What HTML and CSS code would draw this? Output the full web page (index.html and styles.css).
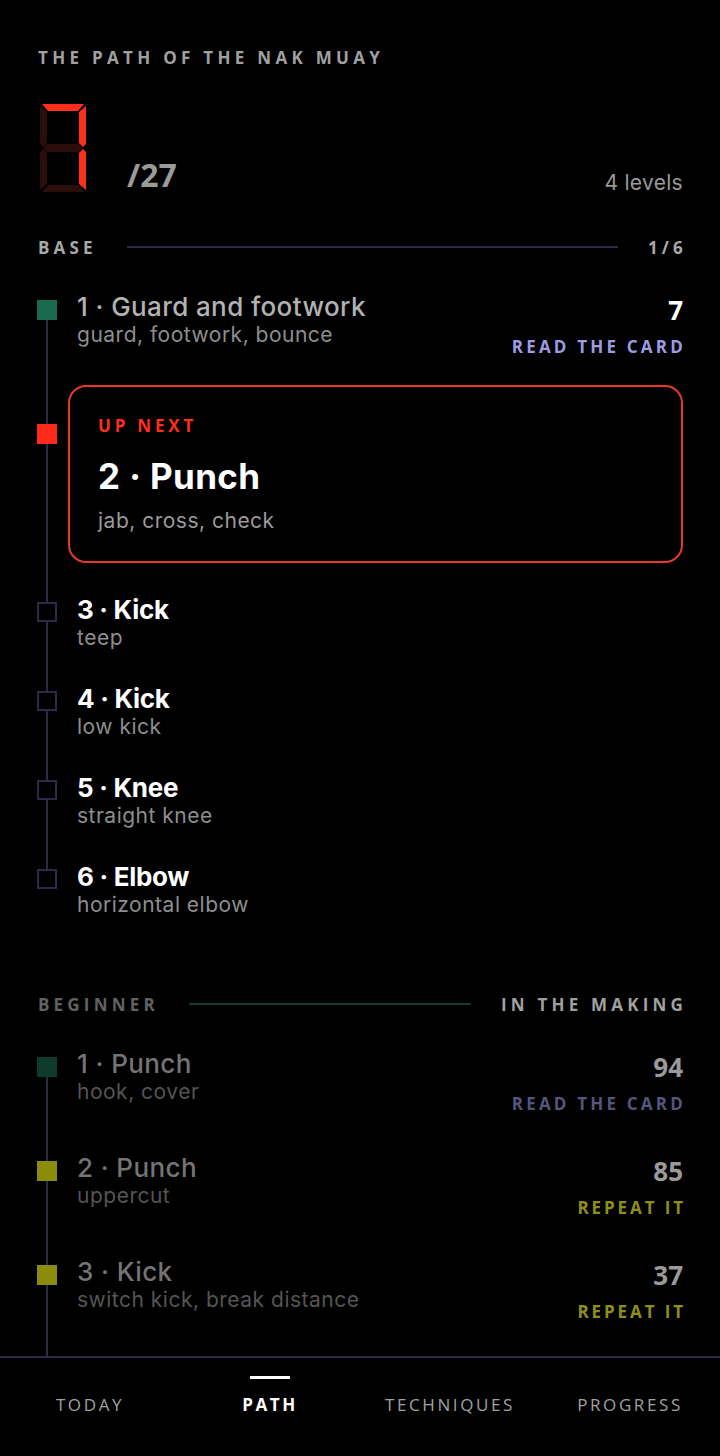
FILE: index.html
```html
<!DOCTYPE html>
<html lang="en">
<head>
    <meta charset="UTF-8">
    <title>The Path</title>
    <link rel="stylesheet" href="styles.css">
</head>
<body>

<div class="app">
    <main class="page">
        <div class="eyebrow">THE PATH OF THE NAK MUAY</div>

        <div class="score">
            <svg class="digit" viewBox="0 0 48 90" width="48" height="90">
                <polygon class="on" points="3,1 45,1 39,8 9,8"/>
                <polygon class="off" points="1,3 8,9 8,40 4,44 1,41"/>
                <polygon class="on" points="47,3 47,41 44,44 40,40 40,9"/>
                <polygon class="off" points="4,45 8,41 40,41 44,45 40,49 8,49"/>
                <polygon class="off" points="1,49 4,46 8,50 8,81 1,87"/>
                <polygon class="on" points="47,49 44,46 40,50 40,81 47,87"/>
                <polygon class="off" points="9,82 39,82 45,89 3,89"/>
            </svg>
            <span class="total">/27</span>
            <span class="levels">4 levels</span>
        </div>

        <section class="level">
            <div class="level-head">
                <span class="level-name">BASE</span>
                <span class="level-line"></span>
                <span class="level-count">1/6</span>
            </div>

            <div class="steps">
                <div class="step done">
                    <span class="mark mark-green"></span>
                    <div class="step-body">
                        <div class="step-title">1 · Guard and footwork</div>
                        <div class="step-sub">guard, footwork, bounce</div>
                    </div>
                    <div class="step-side">
                        <div class="step-num">7</div>
                        <div class="step-link">READ THE CARD</div>
                    </div>
                </div>

                <div class="step current">
                    <span class="mark mark-red"></span>
                    <div class="next-card">
                        <div class="next-label">UP NEXT</div>
                        <div class="next-title">2 · Punch</div>
                        <div class="next-sub">jab, cross, check</div>
                    </div>
                </div>

                <div class="step">
                    <span class="mark mark-empty"></span>
                    <div class="step-body">
                        <div class="step-title">3 · Kick</div>
                        <div class="step-sub">teep</div>
                    </div>
                </div>

                <div class="step">
                    <span class="mark mark-empty"></span>
                    <div class="step-body">
                        <div class="step-title">4 · Kick</div>
                        <div class="step-sub">low kick</div>
                    </div>
                </div>

                <div class="step">
                    <span class="mark mark-empty"></span>
                    <div class="step-body">
                        <div class="step-title">5 · Knee</div>
                        <div class="step-sub">straight knee</div>
                    </div>
                </div>

                <div class="step">
                    <span class="mark mark-empty"></span>
                    <div class="step-body">
                        <div class="step-title">6 · Elbow</div>
                        <div class="step-sub">horizontal elbow</div>
                    </div>
                </div>
            </div>
        </section>

        <section class="level level-later">
            <div class="level-head">
                <span class="level-name">BEGINNER</span>
                <span class="level-line"></span>
                <span class="level-count">IN THE MAKING</span>
            </div>

            <div class="steps">
                <div class="step done">
                    <span class="mark mark-darkgreen"></span>
                    <div class="step-body">
                        <div class="step-title">1 · Punch</div>
                        <div class="step-sub">hook, cover</div>
                    </div>
                    <div class="step-side">
                        <div class="step-num">94</div>
                        <div class="step-link">READ THE CARD</div>
                    </div>
                </div>

                <div class="step done">
                    <span class="mark mark-olive"></span>
                    <div class="step-body">
                        <div class="step-title">2 · Punch</div>
                        <div class="step-sub">uppercut</div>
                    </div>
                    <div class="step-side">
                        <div class="step-num">85</div>
                        <div class="step-link repeat">REPEAT IT</div>
                    </div>
                </div>

                <div class="step done">
                    <span class="mark mark-olive"></span>
                    <div class="step-body">
                        <div class="step-title">3 · Kick</div>
                        <div class="step-sub">switch kick, break distance</div>
                    </div>
                    <div class="step-side">
                        <div class="step-num">37</div>
                        <div class="step-link repeat">REPEAT IT</div>
                    </div>
                </div>
            </div>
        </section>
    </main>

    <nav class="tabbar">
        <a class="tab">TODAY</a>
        <a class="tab active">PATH</a>
        <a class="tab">TECHNIQUES</a>
        <a class="tab">PROGRESS</a>
    </nav>
</div>

</body>
</html>
```

FILE: styles.css
```css
body {
    margin: 0;
    background: #000;
    color: #fff;
    font-family: Inter, "Liberation Sans", sans-serif;
}

.app {
    height: 100vh;
    display: flex;
    flex-direction: column;
}

.page {
    flex: 1;
    overflow: hidden;
    padding: 48px 37px 0 38px;
}

.eyebrow,
.level-name,
.level-count,
.step-link,
.next-label,
.tab {
    font-family: "Open Sans", sans-serif;
}

.eyebrow {
    font-size: 17px;
    line-height: 20px;
    font-weight: 700;
    letter-spacing: 4.3px;
    color: #a0a0a0;
}

/* score */

.score {
    margin-top: 37px;
    height: 88px;
    display: flex;
    align-items: flex-end;
}

.digit {
    display: block;
    margin-left: 1px;
    margin-top: -1px;
}

.digit .on {
    fill: #ff2e1c;
}

.digit .off {
    fill: #2a0e0a;
}

.total {
    margin-left: 40px;
    font-family: "Open Sans", sans-serif;
    font-size: 32px;
    font-weight: 700;
    line-height: 32px;
    color: #9a9a9a;
    margin-bottom: 2px;
}

.levels {
    margin-left: auto;
    font-size: 21px;
    line-height: 24px;
    color: #9a9a9a;
    margin-bottom: -2px;
    letter-spacing: 0.3px;
}

/* levels */

.level {
    margin-top: 44px;
}

.level-later {
    margin-top: 75px;
}

.level-head {
    display: flex;
    align-items: center;
    height: 20px;
}

.level-name,
.level-count {
    font-size: 17px;
    font-weight: 700;
    letter-spacing: 4.2px;
    color: #a8a8a8;
}

.level-count {
    margin-right: -4px;
}

.level-line {
    flex: 1;
    height: 2px;
    background: #2c2a48;
    margin: 0 30px;
}

.level-later .level-name {
    color: #626262;
}

.level-later .level-count {
    color: #a0a0a0;
}

.level-later .level-line {
    background: #163a2d;
}

/* steps */

.steps {
    margin-top: 36px;
    margin-left: -1px;
    display: flex;
    flex-direction: column;
    gap: 33px;
    background: linear-gradient(#2c2a48, #2c2a48) no-repeat 9px 20px / 2px 560px;
}

.level-later .steps {
    gap: 40px;
    padding-bottom: 60px;
    background-size: 2px 100%;
}

.step {
    display: flex;
    align-items: flex-start;
}

.mark {
    flex: none;
    width: 20px;
    height: 20px;
    margin-top: 7px;
    margin-right: 20px;
    box-sizing: border-box;
}

.mark-green { background: #1a6a51; }
.mark-red { background: #ff2a1a; }
.mark-darkgreen { background: #0f3b2c; }
.mark-olive { background: #8b8b0c; }

.mark-empty {
    background: #000;
    border: 2px solid #2c2a48;
    margin-top: 6px;
}

.step-body {
    flex: 1;
}

.step-title {
    font-size: 26px;
    line-height: 28px;
    font-weight: 700;
    color: #fff;
    letter-spacing: -0.3px;
}

.step-sub {
    font-size: 21px;
    line-height: 28px;
    color: #8e8e8e;
    letter-spacing: 0.5px;
}

.done .step-title {
    font-weight: 500;
    color: #b2b2b2;
    letter-spacing: 0.4px;
}

.step-side {
    text-align: right;
}

.step-num {
    font-family: "Open Sans", sans-serif;
    font-size: 26px;
    line-height: 34px;
    font-weight: 700;
    color: #fff;
}

.step-link {
    margin-top: 10px;
    font-size: 17px;
    line-height: 20px;
    font-weight: 700;
    letter-spacing: 3.2px;
    margin-right: -3px;
    color: #9c9ce2;
}

.step-link.repeat {
    letter-spacing: 2.9px;
}

.level-later .step-title { color: #747474; }
.level-later .step-sub { color: #555; }
.level-later .step-num { color: #9a9a9a; }
.level-later .step-link { color: #55557e; }
.level-later .step-link.repeat { color: #8f8f18; }

/* up next card */

.current {
    margin-top: -5px;
}

.current .mark {
    margin-top: 39px;
    margin-right: 11px;
}

.next-card {
    flex: 1;
    border: 2px solid #e6392b;
    border-radius: 18px;
    padding: 29px 28px 26px;
}

.next-label {
    font-size: 17px;
    line-height: 20px;
    font-weight: 700;
    letter-spacing: 3.8px;
    color: #ff2e1c;
}

.next-title {
    margin-top: 20px;
    font-size: 35px;
    line-height: 40px;
    font-weight: 700;
    letter-spacing: 0.4px;
}

.next-sub {
    margin-top: 11px;
    font-size: 21px;
    line-height: 28px;
    color: #9a9a9a;
    letter-spacing: 0.5px;
}

/* tab bar */

.tabbar {
    flex: none;
    height: 98px;
    border-top: 2px solid #2c2a48;
    display: grid;
    grid-template-columns: repeat(4, 1fr);
}

.tab {
    text-align: center;
    padding-top: 37px;
    font-size: 17px;
    line-height: 20px;
    letter-spacing: 2.6px;
    color: #a0a0a0;
    position: relative;
}

.tab.active {
    color: #fff;
    font-weight: 700;
}

.tab.active::before {
    content: "";
    position: absolute;
    top: 18px;
    left: 50%;
    width: 40px;
    height: 3px;
    margin-left: -20px;
    background: #fff;
}
```
